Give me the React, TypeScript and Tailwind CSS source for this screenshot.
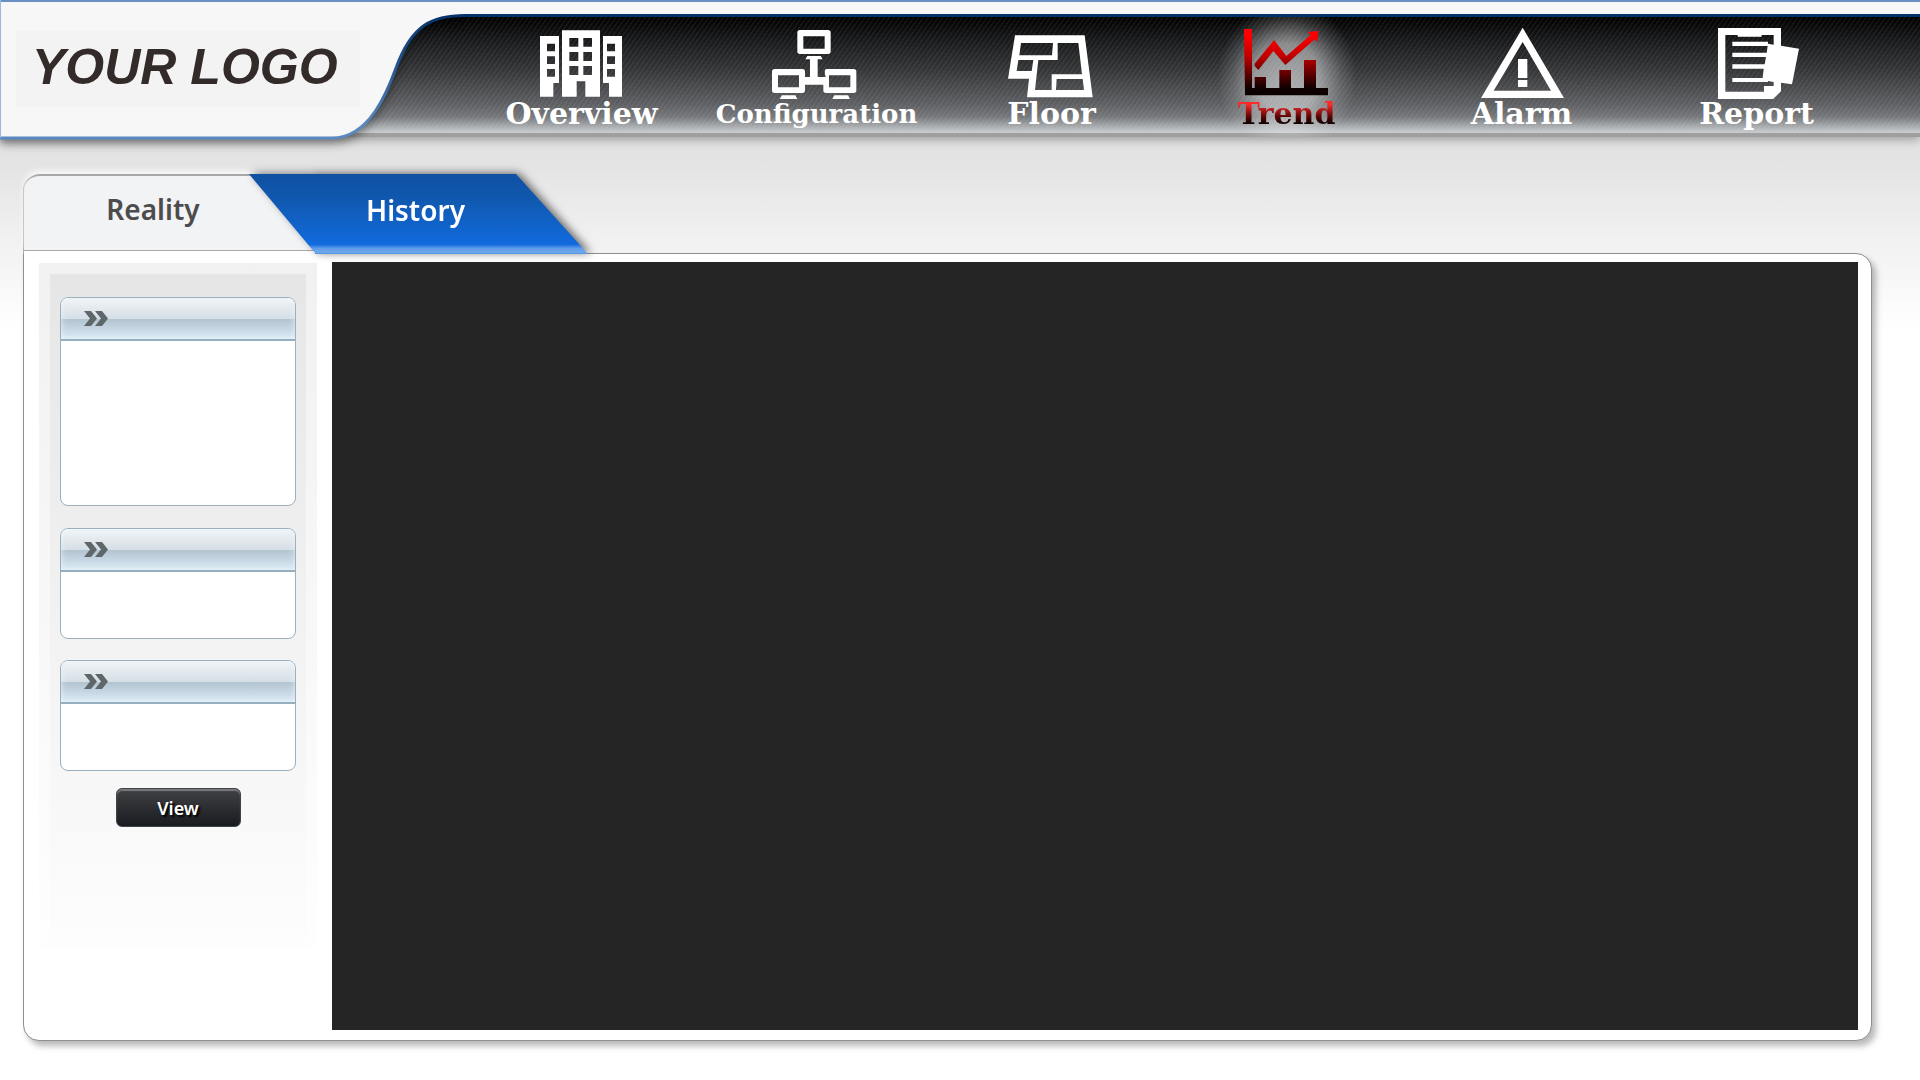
import { useState } from 'react';

interface NavItem {
  label: string;
  viewBox: string;
  path: string;
  small?: boolean;
}

const navItems: NavItem[] = [
  {
    label: 'Overview',
    viewBox: '174 81 264 213',
    path: 'M180 108H237V249H220V290H180ZM201 131V154H225V131ZM201 169V192H225V169ZM201 207V230H225V207ZM246 91H360V290H316V244H290V290H246ZM268 114V140H295V114ZM310 114V140H336V114ZM268 156V183H295V156ZM310 156V183H336V156ZM268 198V225H295V198ZM310 198V225H336V198ZM369 108H426V290H387V249H369ZM381 131V154H405V131ZM381 169V192H405V169ZM381 207V230H405V207Z',
  },
  {
    label: 'Configuration',
    viewBox: '879 81 264 213',
    small: true,
    path: 'M960 90H1044Q1052 90 1052 98V154Q1052 162 1044 162H960Q952 162 952 154V98Q952 90 960 90ZM970 109V146H1034V109ZM982 168H1022L1028 178H1013V231H1037Q1030 207 1040 207H1121Q1129 207 1129 215V271Q1129 279 1121 279H1038Q1030 279 1030 271V254H975V271Q975 279 967 279H884Q876 279 876 271V215Q876 207 884 207H967Q975 207 975 215V231H990V178H976ZM894 226V262H957V226ZM1047 226V262H1111V226ZM906 286H946L952 297H899ZM1063 286H1104L1110 297H1057Z',
  },
  {
    label: 'Floor',
    viewBox: '144 81 264 213',
    path: 'M165 106H374L398 292H201L207 236H144ZM183 129L178 166H276L279 129ZM175 180L170 213H215L220 180ZM293 129V180H235L225 270H275V223H366L355 129ZM290 237L288 270H372L368 237Z',
  },
  {
    label: 'Trend',
    viewBox: '849 81 264 213',
    path: 'M852 87H876V264H1104V286H855ZM884 191L942 120L979 168L1052 105L1044 96L1075 93L1072 127L1064 118L976 195L940 153L895 210L884 198ZM884 231H918V264H884ZM958 210H993V264H958ZM1032 180H1068V264H1032Z',
  },
  {
    label: 'Alarm',
    viewBox: '114 81 264 213',
    path: 'M248 83L372 294H123ZM248 126L161 272H333ZM234 177H262V234H234ZM234 240H262V261H234Z',
  },
  {
    label: 'Report',
    viewBox: '819 81 264 213',
    path: 'M834 84H1023V137L1077 146L1056 253L1023 248V274L999 297H834ZM856 105V275H972V258H1001V246L984 243V246H877V234H968L971 206H877V193H974L978 171H877V158H980L983 138H877V125H984V131L1001 134V105H965V110H893V105Z',
  },
];

const groups = [
  { id: 'first', height: 'h-[209px]', gap: 'mb-[22px]' },
  { id: 'second', height: 'h-[111px]', gap: 'mb-[21px]' },
  { id: 'third', height: 'h-[111px]', gap: 'mb-[17px]' },
];

function NavIcon({ item, active }: { item: NavItem; active: boolean }) {
  return (
    <svg viewBox={item.viewBox} className="relative h-[71px] w-[88px] overflow-visible" aria-hidden="true">
      <defs>
        <linearGradient id="hot" x1="0" y1="0" x2="0" y2="1">
          <stop offset="0.1" stopColor="#ff0000" />
          <stop offset="0.4" stopColor="#c40000" />
          <stop offset="0.9" stopColor="#0c0000" />
        </linearGradient>
      </defs>
      <path d={item.path} fillRule="evenodd" fill={active ? 'url(#hot)' : '#ffffff'} />
    </svg>
  );
}

function Header() {
  const [current, setCurrent] = useState('Trend');

  return (
    <header className="relative h-[137px] border-t-2 border-[#6890c4] bg-[#f7f7f7] pt-3 shadow-[0_2px_10px_rgba(0,0,0,0.35)]">
      <div className="h-[123px] border-t-3 border-b-4 border-t-[#05316a] border-b-[#9f9f9f] bg-[repeating-linear-gradient(125deg,rgba(255,255,255,0.06)_0px,rgba(255,255,255,0.06)_1px,transparent_2px,transparent_4px),linear-gradient(to_bottom,#000000_0%,#18191b_20%,#343638_46%,#5d5f62_75%,#75777a_86%,#c5c9cc_99%)]">
        <nav className="mr-[46px] ml-[464px] grid h-full grid-cols-6 pt-[10px]">
          {navItems.map((item) => {
            const active = item.label === current;
            return (
              <button
                key={item.label}
                onClick={() => setCurrent(item.label)}
                className="relative flex cursor-pointer flex-col items-center"
              >
                {active && (
                  <span className="absolute -top-[10px] h-[120px] w-[140px] bg-[radial-gradient(70px_75px,rgba(255,255,255,0.55)_0%,rgba(255,255,255,0.48)_45%,rgba(255,255,255,0.15)_78%,transparent_100%)]" />
                )}
                <NavIcon item={item} active={active} />
                <span
                  className={`relative font-['DejaVu_Serif',serif] leading-8 font-bold ${item.small ? 'text-[26px]' : 'text-[30px]'} ${
                    active
                      ? 'bg-linear-to-b from-[#ff2a2a] from-20% to-[#100000] to-80% bg-clip-text text-transparent'
                      : 'text-white'
                  }`}
                >
                  {item.label}
                </span>
              </button>
            );
          })}
        </nav>
      </div>

      <a href="#" className="absolute -top-[2px] left-0 block h-[140px] w-[465px] [clip-path:inset(0_0_-20px_0)]">
        <svg
          viewBox="0 0 465 140"
          className="absolute inset-0 h-[140px] w-[465px] overflow-visible drop-shadow-[0_4px_5px_rgba(0,0,0,0.4)]"
          aria-hidden="true"
        >
          <defs>
            <linearGradient id="edge" x1="0" y1="0" x2="0" y2="140" gradientUnits="userSpaceOnUse">
              <stop offset="0.1" stopColor="#05316a" />
              <stop offset="0.5" stopColor="#2a5890" />
              <stop offset="0.9" stopColor="#5a88bf" />
            </linearGradient>
          </defs>
          <path d="M0 2H490V15H460C433 16 412 24 396 68C388 90 370 138 332 138H0Z" fill="#f7f7f7" />
          <path d="M0 138H332C370 138 388 90 396 68C412 24 433 15.500 465 15.500H490" fill="none" stroke="url(#edge)" strokeWidth="3" />
          <path d="M0 1H490" stroke="#6890c4" strokeWidth="2" />
          <path d="M0.500 0V138" stroke="#9bb9dd" />
        </svg>
        <span className="relative mt-[31px] ml-4 flex h-[76px] w-[344px] items-center bg-[#f3f3f3] pb-1 pl-4 font-['Liberation_Sans',Arial,sans-serif] text-[50px] leading-[56px] font-bold text-[#332b29] italic">
          YOUR LOGO
        </span>
      </a>
    </header>
  );
}

function Tabs() {
  return (
    <div role="tablist" className="relative z-10 flex h-20 font-['Noto_Sans',sans-serif] text-[28px] leading-9 font-semibold">
      <div className="w-[292px] rounded-tl-2xl border-l border-[#a9a9a9] bg-white">
        <button
          role="tab"
          aria-selected="false"
          className="h-[77px] w-full cursor-pointer rounded-tl-2xl border-t-2 border-b border-[#a9a9a9] bg-[#f2f3f5] pr-[33px] pb-2 text-[#4c4c4c] shadow-[0_-3px_6px_rgba(255,255,255,0.8)]"
        >
          Reality
        </button>
      </div>
      <div className="-ml-[66px] drop-shadow-[3px_-1px_4px_rgba(0,0,0,0.55)]">
        <button
          role="tab"
          aria-selected="true"
          className="h-20 w-[339px] cursor-pointer bg-[linear-gradient(to_bottom,#0f50a2_0%,#1058ae_30%,#116add_88%,#5f9de9_93%,#70a8ec_98%,#4b8ee2_100%)] pr-[6px] pb-2 text-white [clip-path:polygon(0_0,267px_0,100%_100%,67px_100%)]"
        >
          History
        </button>
      </div>
    </div>
  );
}

function Group({ height, gap }: { height: string; gap: string }) {
  return (
    <section className={`overflow-hidden rounded-lg border border-[#9bb0be] bg-white ${height} ${gap}`}>
      <button
        aria-label="Toggle"
        className="flex h-[43px] w-full cursor-pointer items-center border-b-2 border-[#96afbf] bg-[linear-gradient(to_bottom,#f1f5f8_0%,#d6dfe6_50%,#b1c3cf_50%,#dbeaf6_100%)] pl-[23px] shadow-[inset_0_0_6px_rgba(235,245,250,0.9)]"
      >
        <svg viewBox="0 0 24 15" className="h-[15px] w-6" aria-hidden="true">
          <path d="M0 0H7L13 7.500L7 15H0L6 7.500ZM11 0H18L24 7.500L18 15H11L17 7.500Z" fill="#5f676b" />
        </svg>
      </button>
    </section>
  );
}

function Sidebar() {
  return (
    <aside className="mt-px w-[278px] shrink-0 self-start bg-linear-to-b from-[#f1f1f1] to-[#fefefe] px-[11px] pt-[11px]">
      <div className="flex flex-col bg-linear-to-b from-[#e6e6e6] to-[#fdfdfd] px-[10px] pt-[23px] pb-[121px]">
        {groups.map((group) => (
          <Group key={group.id} height={group.height} gap={group.gap} />
        ))}
        <button className="h-[39px] w-[125px] cursor-pointer self-center rounded-md border border-[#41434c] bg-linear-to-b from-[#414244] to-[#181b20] font-['Noto_Sans',sans-serif] text-lg leading-6 font-semibold text-white shadow-[inset_0_2px_1px_rgba(255,255,255,0.3)] [text-shadow:2px_2px_2px_#000000]">
          View
        </button>
      </div>
    </aside>
  );
}

export default function App() {
  return (
    <div className="flex min-h-screen flex-col bg-white bg-[linear-gradient(to_bottom,#dfdfdf_0px,#e3e3e3_160px,#f1f1f1_240px,#ffffff_330px)]">
      <Header />
      <main className="mt-[37px] mr-12 mb-[39px] ml-[23px] flex flex-1 flex-col">
        <Tabs />
        <div className="-mt-px flex flex-1 gap-[15px] rounded-2xl rounded-tl-none border border-[#8f8f8f] bg-white pt-2 pr-[13px] pb-[10px] pl-[15px] shadow-[4px_5px_6px_rgba(0,0,0,0.28)]">
          <Sidebar />
          <div className="min-w-0 flex-1 bg-[#252525]" />
        </div>
      </main>
    </div>
  );
}
